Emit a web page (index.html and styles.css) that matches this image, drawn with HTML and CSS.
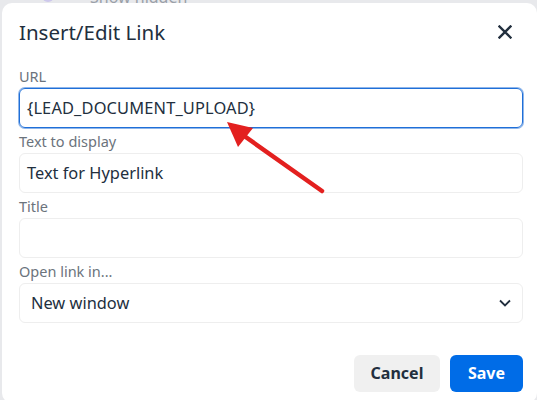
FILE: index.html
```html
<!DOCTYPE html>
<html>
<head>
<meta charset="utf-8">
<link rel="stylesheet" href="styles.css">
</head>
<body>
<div class="backdrop">
  <span class="bg-dot"></span><span class="bg-text">Show hidden</span>
</div>
<div class="dialog">
  <div class="header">
    <div class="title">Insert/Edit Link</div>
    <svg class="close" width="14" height="14" viewBox="0 0 14 14"><path d="M1.5 1.5 L12.5 12.5 M12.5 1.5 L1.5 12.5" stroke="#222f3e" stroke-width="2.4" stroke-linecap="square"/></svg>
  </div>
  <div class="body">
    <div class="group">
      <div class="label">URL</div>
      <div class="input focus"><span class="caps">{LEAD_DOCUMENT_UPLOAD}</span></div>
    </div>
    <div class="group">
      <div class="label">Text to display</div>
      <div class="input">Text for Hyperlink</div>
    </div>
    <div class="group">
      <div class="label">Title</div>
      <div class="input"></div>
    </div>
    <div class="group">
      <div class="label">Open link in...</div>
      <div class="input select"><span>New window</span>
        <svg width="12" height="8" viewBox="0 0 12 8"><path d="M1 1.5 L6 6.5 L11 1.5" fill="none" stroke="#222f3e" stroke-width="1.8"/></svg>
      </div>
    </div>
  </div>
  <div class="footer">
    <div class="btn cancel">Cancel</div>
    <div class="btn save">Save</div>
  </div>
</div>
<svg class="arrow" width="537" height="400" viewBox="0 0 537 400">
  <line x1="322" y1="191" x2="240" y2="133" stroke="#e3201f" stroke-width="4.5" stroke-linecap="round"/>
  <polygon points="227,122 253,128 238,147" fill="#e3201f"/>
</svg>
</body>
</html>
```
FILE: styles.css
```css
html, body {
  margin: 0;
  padding: 0;
}
body {
  width: 537px;
  height: 400px;
  background: #e8e9ec;
  overflow: hidden;
  position: relative;
  font-family: "Noto Sans", "Open Sans", sans-serif;
  color: #222f3e;
}
.backdrop {
  position: absolute;
  left: 0;
  top: -14px;
  height: 18px;
  width: 537px;
}
.bg-dot {
  position: absolute;
  left: 42px;
  top: 2px;
  width: 12px;
  height: 14px;
  border-radius: 6px;
  background: #cdc8ec;
}
.bg-text {
  position: absolute;
  left: 90px;
  top: 0;
  font-size: 16px;
  color: #9aa0a8;
}
.dialog {
  position: absolute;
  left: 2px;
  top: 3px;
  width: 535px;
  height: 400px;
  background: #fff;
  border-radius: 10px;
  box-sizing: border-box;
  display: flex;
  flex-direction: column;
}
.header {
  display: flex;
  align-items: center;
  justify-content: space-between;
  padding: 0 25px 0 17px;
  height: 57px;
}
.title {
  font-size: 20.5px;
  line-height: 26px;
  padding-top: 1px;
}
.close {
  display: block;
  margin-top: 1px;
}
.body {
  padding: 4px 14px 0 17px;
  display: flex;
  flex-direction: column;
  gap: 1px;
}
.label {
  font-size: 14.5px;
  line-height: 24px;
  height: 24px;
  color: #6b737c;
}
.input {
  height: 40px;
  box-sizing: border-box;
  border: 1px solid #eeeeee;
  border-radius: 6px;
  font-size: 16.4px;
  line-height: 38px;
  padding: 0 7px;
  color: #222f3e;
  display: flex;
  align-items: center;
}
.input.focus {
  border: 1px solid #1f6fd8;
  box-shadow: 0 0 0 1px #8fb6ea;
}
.caps {
  letter-spacing: 0.15px;
}
.select {
  justify-content: space-between;
  padding-right: 11px;
  padding-left: 11px;
}
.footer {
  display: flex;
  justify-content: flex-end;
  gap: 10px;
  padding: 32px 14px 0 0;
}
.btn {
  height: 37px;
  line-height: 37px;
  border-radius: 6px;
  font-size: 16px;
  font-weight: 700;
  text-align: center;
}
.cancel {
  width: 86px;
  background: #f0f0f0;
  color: #222f3e;
}
.save {
  width: 73px;
  background: #006ce7;
  color: #fff;
}
.arrow {
  position: absolute;
  left: 0;
  top: 0;
}
```
